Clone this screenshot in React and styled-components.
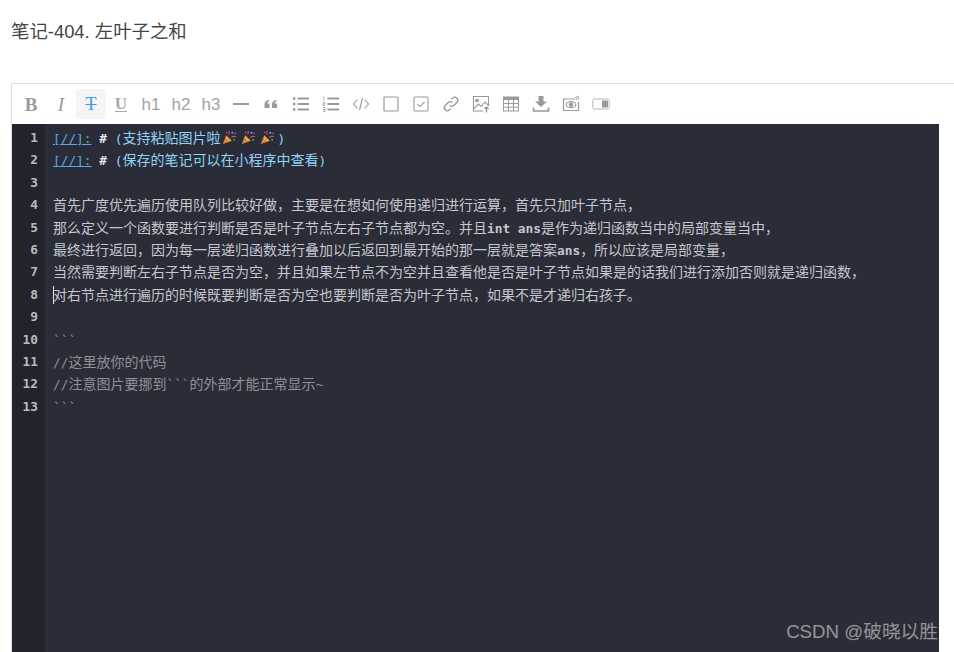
import React from "react";
import styled, { createGlobalStyle } from "styled-components";

const GlobalStyle = createGlobalStyle`
  html, body {
    margin: 0;
    padding: 0;
    background: #fff;
    overflow: hidden;
  }
`;

const Page = styled.div`
  position: relative;
  width: 954px;
  height: 652px;
  overflow: hidden;
  font-family: "Liberation Sans", "Noto Sans CJK SC", sans-serif;
`;

const Title = styled.h1`
  margin: 0;
  padding: 21px 0 0 11px;
  height: 83px;
  box-sizing: border-box;
  font-size: 18.4px;
  line-height: 22px;
  font-weight: 400;
  color: #444;
`;

const Editor = styled.div`
  margin-left: 11px;
  border-left: 1px solid #ddd;
`;

const Toolbar = styled.div`
  display: flex;
  align-items: center;
  height: 40px;
  padding-left: 4px;
  background: #fff;
  border-top: 1px solid #ddd;
`;

const ToolButton = styled.div`
  width: 30px;
  height: 30px;
  flex: none;
  display: flex;
  align-items: center;
  justify-content: center;
  border-radius: 3px;
  background: ${(p) => (p.$active ? "#f5f5f5" : "transparent")};
  color: ${(p) => (p.$active ? "#3e98f5" : "#9a9a9a")};
`;

const Glyph = styled.span`
  font-family: "Liberation Serif", serif;
  font-size: 19px;
  line-height: 1;
  font-weight: ${(p) => (p.$bold ? 700 : 400)};
  font-style: ${(p) => (p.$italic ? "italic" : "normal")};
`;

const Heading = styled.span`
  font-family: "Liberation Sans", sans-serif;
  font-size: 17px;
  line-height: 1;
  color: #a3a3a3;
`;

const Body = styled.div`
  display: flex;
  width: 927px;
  height: 528px;
  background: #2a2c37;
`;

const Gutter = styled.div`
  width: 33px;
  flex: none;
  box-sizing: border-box;
  padding: 3px 7px 0 0;
  background: #22242b;
  text-align: right;
  font-family: "DejaVu Sans Mono", monospace;
  font-size: 12.8px;
  font-weight: 700;
  color: #b9bbc0;
`;

const LineNo = styled.div`
  height: 22.42px;
  line-height: 22.42px;
`;

const Code = styled.div`
  flex: 1;
  padding: 2px 0 0 8px;
  font-family: "Noto Sans CJK SC", sans-serif;
  font-size: 14px;
  color: #c3c7ce;
`;

const Line = styled.div`
  position: relative;
  height: 22.42px;
  line-height: 22.42px;
  white-space: pre;
  color: ${(p) => (p.$tone === "comment" ? "#8f9196" : p.$tone === "quote" ? "#8fd3f5" : "inherit")};
`;

const Mono = styled.span`
  font-family: "DejaVu Sans Mono", monospace;
  font-size: 12.8px;
  font-weight: ${(p) => (p.$bold ? 700 : 400)};
`;

const RefLink = styled(Mono)`
  color: #5aa9e6;
  text-decoration: underline;
`;

const Hash = styled(Mono)`
  color: #e8eaee;
  font-weight: 700;
`;

const Caret = styled.span`
  position: absolute;
  left: 0;
  top: 3px;
  width: 1px;
  height: 18px;
  background: #e6e6e6;
`;

const Popper = styled.svg`
  width: 15px;
  height: 15px;
  margin: 0 2px;
  vertical-align: -2px;
`;

const Watermark = styled.div`
  position: absolute;
  right: 16px;
  bottom: 9px;
  font-size: 18.7px;
  line-height: 22px;
  color: rgba(255, 255, 255, 0.5);
`;

const Icon = ({ children }) => (
  <svg width="18" height="18" viewBox="0 0 18 18" fill="none" stroke="#9a9a9a" strokeWidth="1.3">
    {children}
  </svg>
);

const ICONS = {
  rule: <path d="M1 9h16" strokeWidth="2" />,
  quote: (
    <path
      d="M2.5 13V9.5C2.5 7 4 5.5 7 5v1.6C5.6 7 5.2 7.8 5.2 8.6H7.6V13zM10 13V9.5C10 7 11.5 5.5 14.5 5v1.6c-1.4.4-1.8 1.2-1.8 2h2.4V13z"
      fill="#9a9a9a"
      stroke="none"
    />
  ),
  list: (
    <g strokeWidth="2">
      <path d="M5.5 3.5H17M5.5 9H17M5.5 14.5H17" />
      <path d="M1 3.5h2.4M1 9h2.4M1 14.5h2.4" strokeWidth="2.4" />
    </g>
  ),
  ordered: (
    <g>
      <path d="M5.5 3.5H17M5.5 9H17M5.5 14.5H17" strokeWidth="2" />
      <path d="M1.8 1.5v4M1 7.5h1.8v1.5H1v1.5h2M1 12.5h2v4H1M1 14.5h2" strokeWidth=".8" />
    </g>
  ),
  code: <path d="M5.5 4.5 1.5 9l4 4.5M12.5 4.5l4 4.5-4 4.5M10.5 3 7.5 15" strokeWidth="1.1" />,
  square: <rect x="2" y="2" width="14" height="14" rx="1" strokeWidth="1.2" />,
  checked: (
    <g strokeWidth="1.1">
      <rect x="2" y="2" width="14" height="14" rx="1" />
      <path d="M5.5 9.2 8 11.6l4.5-4.6" />
    </g>
  ),
  link: (
    <g strokeWidth="1.4">
      <path d="M7.5 10.5a3 3 0 0 0 4.3 0l3-3a3 3 0 0 0-4.3-4.3L9.4 4.3" />
      <path d="M10.5 7.5a3 3 0 0 0-4.3 0l-3 3a3 3 0 0 0 4.3 4.3l1.1-1.1" />
    </g>
  ),
  image: (
    <g strokeWidth="1.1">
      <path d="M11 16H1.5V1.5h15V11" />
      <circle cx="5" cy="5.5" r="1.3" fill="#9a9a9a" />
      <path d="M2 13.5 6.5 9l2.5 2.5 4-4.5 3 3" />
      <path d="M14.5 17.5v-5M12.5 14l2-2 2 2" strokeWidth="1.4" />
    </g>
  ),
  table: (
    <g strokeWidth="1">
      <rect x="1.5" y="2" width="15" height="14" />
      <path d="M1.5 3.5h15" strokeWidth="3" />
      <path d="M1.5 8.5h15M1.5 12.2h15M6.5 5v11M11.5 5v11" />
    </g>
  ),
  download: (
    <g>
      <path d="M6.5 1h5v5.5h3.5L9 12 3 6.5h3.5z" fill="#9a9a9a" stroke="none" />
      <path d="M1.5 12.5v3.5h15v-3.5" strokeWidth="1.7" />
    </g>
  ),
  preview: (
    <g strokeWidth="1.2">
      <path d="M13 4H1.5v11.5h15V7" />
      <ellipse cx="9" cy="9.7" rx="4.8" ry="3" />
      <circle cx="9" cy="9.7" r="1.6" fill="#9a9a9a" />
      <circle cx="15.3" cy="2.8" r="1.5" strokeWidth="1" />
    </g>
  ),
  toggle: (
    <g>
      <rect x="0.8" y="4" width="16.4" height="10" rx="1.5" strokeWidth="1" stroke="#b5b5b5" />
      <rect x="10" y="5.5" width="6" height="7" fill="#9a9a9a" stroke="none" />
    </g>
  ),
};

const TOOLS = [
  { glyph: "B", bold: true },
  { glyph: "I", italic: true },
  { strike: true, active: true },
  { under: true },
  { heading: "h1" },
  { heading: "h2" },
  { heading: "h3" },
  { icon: "rule" },
  { icon: "quote" },
  { icon: "list" },
  { icon: "ordered" },
  { icon: "code" },
  { icon: "square" },
  { icon: "checked" },
  { icon: "link" },
  { icon: "image" },
  { icon: "table" },
  { icon: "download" },
  { icon: "preview" },
  { icon: "toggle" },
];

const StrikeT = styled(Glyph)`
  font-size: 18px;
  line-height: 15px;
  padding: 0 1.5px;
  text-decoration: line-through;
  text-decoration-thickness: 1px;
  color: #3e98f5;
`;

const UnderU = styled(Glyph)`
  font-weight: 700;
  font-size: 17px;
  line-height: 14px;
  border-bottom: 1.5px solid #a8a8a8;
  color: #a8a8a8;
`;

const Tool = ({ tool }) => (
  <ToolButton $active={tool.active}>
    {tool.glyph && (
      <Glyph $bold={tool.bold} $italic={tool.italic}>
        {tool.glyph}
      </Glyph>
    )}
    {tool.strike && <StrikeT>T</StrikeT>}
    {tool.under && <UnderU>U</UnderU>}
    {tool.heading && <Heading>{tool.heading}</Heading>}
    {tool.icon && <Icon>{ICONS[tool.icon]}</Icon>}
  </ToolButton>
);

// party popper, no colour emoji font to rely on here
const PartyPopper = () => (
  <Popper viewBox="0 0 16 16">
    <path d="M1 15 4.5 5.5 10.5 11.5z" fill="#e8a33d" />
    <path d="M3 9.5 6.5 13M2.2 12 4 13.8" stroke="#c2502e" strokeWidth="1" />
    <path d="M7 5c1-1 1-2.5.5-4M10 8c1.5-1.5 3-1.5 5-1" stroke="#d6408f" strokeWidth="1.2" fill="none" />
    <circle cx="11" cy="3" r="1.1" fill="#3fb6e8" />
    <circle cx="14" cy="3.5" r=".9" fill="#8d5fd3" />
    <circle cx="13" cy="10.5" r="1" fill="#5fbf4a" />
    <circle cx="5" cy="2.5" r=".9" fill="#e0453a" />
  </Popper>
);

const RefPrefix = () => (
  <>
    <RefLink>[//]:</RefLink>
    <Mono> </Mono>
    <Hash>#</Hash>
    <Mono> </Mono>
  </>
);

const App = () => (
  <Page>
    <GlobalStyle />
    <Title>笔记-404. 左叶子之和</Title>
    <Editor>
      <Toolbar>
        {TOOLS.map((tool, i) => (
          <Tool key={i} tool={tool} />
        ))}
      </Toolbar>
      <Body>
        <Gutter>
          {Array.from({ length: 13 }, (_, i) => (
            <LineNo key={i}>{i + 1}</LineNo>
          ))}
        </Gutter>
        <Code>
          <Line $tone="quote">
            <RefPrefix />
            <Mono>(</Mono>支持粘贴图片啦<PartyPopper /><PartyPopper /><PartyPopper /><Mono>)</Mono>
          </Line>
          <Line $tone="quote">
            <RefPrefix />
            <Mono>(</Mono>保存的笔记可以在小程序中查看<Mono>)</Mono>
          </Line>
          <Line />
          <Line>首先广度优先遍历使用队列比较好做，主要是在想如何使用递归进行运算，首先只加叶子节点，</Line>
          <Line>
            那么定义一个函数要进行判断是否是叶子节点左右子节点都为空。并且<Mono $bold>int ans</Mono>是作为递归函数当中的局部变量当中，
          </Line>
          <Line>
            最终进行返回，因为每一层递归函数进行叠加以后返回到最开始的那一层就是答案<Mono $bold>ans</Mono>，所以应该是局部变量，
          </Line>
          <Line>当然需要判断左右子节点是否为空，并且如果左节点不为空并且查看他是否是叶子节点如果是的话我们进行添加否则就是递归函数，</Line>
          <Line>
            <Caret />
            对右节点进行遍历的时候既要判断是否为空也要判断是否为叶子节点，如果不是才递归右孩子。
          </Line>
          <Line />
          <Line $tone="comment"><Mono>```</Mono></Line>
          <Line $tone="comment"><Mono>//</Mono>这里放你的代码</Line>
          <Line $tone="comment"><Mono>//</Mono>注意图片要挪到<Mono>```</Mono>的外部才能正常显示<Mono>~</Mono></Line>
          <Line $tone="comment"><Mono>```</Mono></Line>
        </Code>
      </Body>
    </Editor>
    <Watermark>CSDN @破晓以胜</Watermark>
  </Page>
);

export default App;
